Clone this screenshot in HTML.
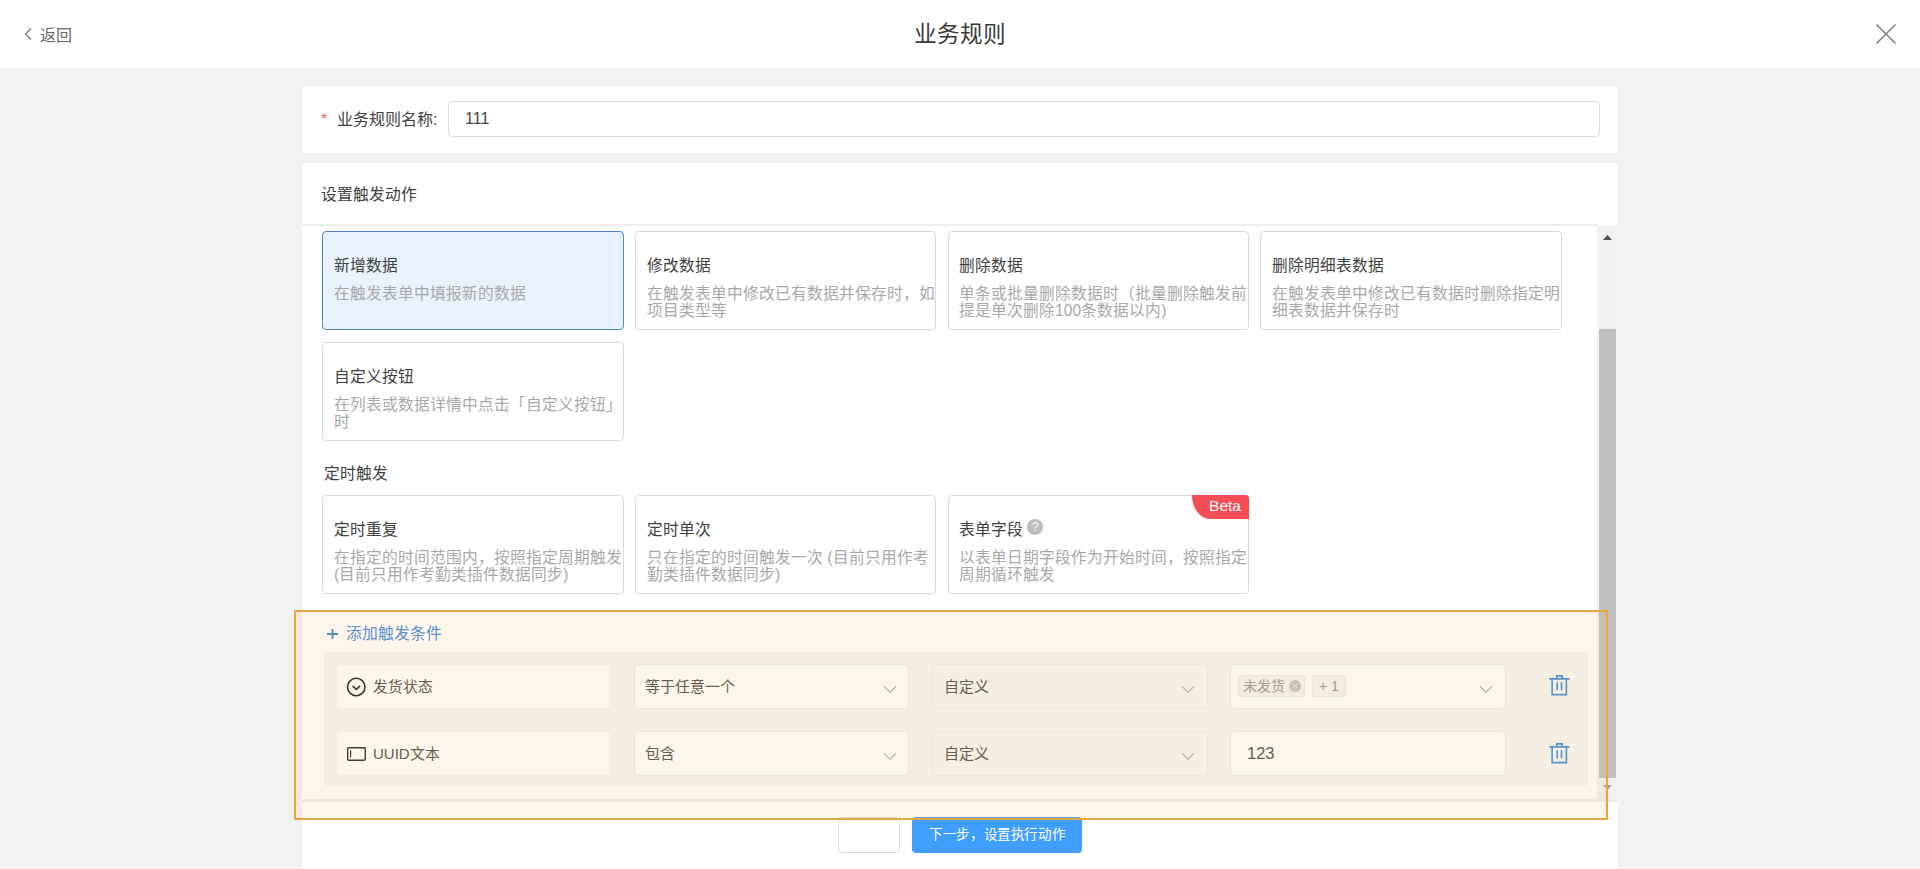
<!DOCTYPE html>
<html lang="zh-CN">
<head>
<meta charset="utf-8">
<style>
*{box-sizing:border-box;margin:0;padding:0}
html,body{width:1920px;height:869px;overflow:hidden;background:#f2f2f5;font-family:"Liberation Sans",sans-serif;color:#333}
.abs{position:absolute}
.hdr{left:0;top:0;width:1920px;height:68px;background:#fff}
.back{left:40px;top:24.5px;font-size:16px;line-height:22px;color:#666}
.title{left:0;top:20px;width:1920px;text-align:center;font-size:22.6px;line-height:30px;color:#3a3a3a}
.card1{left:302px;top:86px;width:1316px;height:67px;background:#fff;border-radius:4px}
.card2{left:302px;top:163px;width:1316px;height:62px;background:#fff;border-radius:4px 4px 0 0}
.scr{left:302px;top:225px;width:1314px;height:577px;background:#fff}
.lbl{font-size:16px;line-height:22px;color:#404040;white-space:nowrap}
.input{left:448px;top:101px;width:1152px;height:36px;border:1px solid #dcdcdc;border-radius:4px;background:#fff}
.sep{left:302px;top:224px;width:1296px;height:2px;background:#eeeeee}
.tc{width:302px;height:99px;border:1px solid #d9d9d9;border-radius:4px;background:#fff;overflow:hidden}
.tc.sel{background:#e8f2fc;border-color:#5286c8}
.tc .t{position:absolute;left:11px;top:22.6px;font-size:15.7px;line-height:22px;color:#404040;white-space:nowrap}
.tc .d{position:absolute;left:11px;top:52.7px;width:289px;font-size:15.7px;line-height:17.5px;color:#a8a8a8}
.track{left:1597px;top:226px;width:19px;height:574px;background:#f1f1f1}
.thumb{left:1599px;top:329px;width:17px;height:449px;background:#c1c1c1}
.footer{left:302px;top:799px;width:1316px;height:70px;background:#fff}
.fsh{left:302px;top:799px;width:1316px;height:3px;background:linear-gradient(#f3f3f3,#ececec)}
.btn{height:36px;border-radius:4px;font-size:14px;line-height:36px;text-align:center}
.panel{left:324px;top:652px;width:1264px;height:134px;background:#f5f6f8;border-radius:4px}
.fld{height:45px;border:1px solid #ececec;border-radius:4px;background:#fff;font-size:15px;line-height:43px;color:#555;white-space:nowrap}
.fld.dis{background:#f5f6f8}
.ovl{left:294px;top:610px;width:1314px;height:210px;border:2px solid #e7a73e;background:rgba(245,162,45,0.1)}
</style>
</head>
<body>
<div class="abs hdr"></div>
<svg class="abs" style="left:24px;top:27px" width="10" height="14" viewBox="0 0 10 14"><path d="M7 1.5 L1.5 7 L7 12.5" fill="none" stroke="#777" stroke-width="1.3"/></svg>
<div class="abs back">返回</div>
<div class="abs title">业务规则</div>
<svg class="abs" style="left:1874px;top:22px" width="24" height="24" viewBox="0 0 24 24"><path d="M2.5 2.5 L21.5 21.5 M21.5 2.5 L2.5 21.5" fill="none" stroke="#808080" stroke-width="1.6"/></svg>

<div class="abs card1"></div>
<div class="abs lbl" style="left:321px;top:109px;color:#f56c6c">*</div>
<div class="abs lbl" style="left:337px;top:108.5px">业务规则名称:</div>
<div class="abs input"></div>
<div class="abs lbl" style="left:465px;top:108px;font-size:16px;color:#444">111</div>

<div class="abs card2"></div>
<div class="abs scr"></div>
<div class="abs lbl" style="left:321px;top:183.5px;font-size:15.8px">设置触发动作</div>
<div class="abs sep"></div>

<div class="abs tc sel" style="left:322px;top:231px"><div class="t">新增数据</div><div class="d">在触发表单中填报新的数据</div></div>
<div class="abs tc" style="left:635px;top:231px;width:301px"><div class="t">修改数据</div><div class="d">在触发表单中修改已有数据并保存时，如项目类型等</div></div>
<div class="abs tc" style="left:948px;top:231px;width:301px"><div class="t" style="left:10px">删除数据</div><div class="d" style="left:10px">单条或批量删除数据时（批量删除触发前提是单次删除100条数据以内)</div></div>
<div class="abs tc" style="left:1260px;top:231px"><div class="t">删除明细表数据</div><div class="d">在触发表单中修改已有数据时删除指定明细表数据并保存时</div></div>
<div class="abs tc" style="left:322px;top:342px"><div class="t">自定义按钮</div><div class="d">在列表或数据详情中点击「自定义按钮」时</div></div>

<div class="abs lbl" style="left:324px;top:462.5px;font-size:15.7px">定时触发</div>
<div class="abs tc" style="left:322px;top:495px"><div class="t">定时重复</div><div class="d">在指定的时间范围内，按照指定周期触发(目前只用作考勤类插件数据同步)</div></div>
<div class="abs tc" style="left:635px;top:495px;width:301px"><div class="t">定时单次</div><div class="d">只在指定的时间触发一次 (目前只用作考勤类插件数据同步)</div></div>
<div class="abs tc" style="left:948px;top:495px;width:301px"><div class="t" style="left:10px">表单字段 <span style="display:inline-block;width:16px;height:16px;border-radius:8px;background:#bdbdbd;color:#fff;font-size:12px;line-height:16px;text-align:center;vertical-align:3.5px">?</span></div><div class="d" style="left:10px">以表单日期字段作为开始时间，按照指定周期循环触发</div>
</div>
<div class="abs" style="left:1192px;top:495px;width:57px;height:24px;background:#f54d55;border-top-right-radius:4px;border-bottom-left-radius:18px 24px;color:#fff;font-size:15.5px;line-height:21px;text-align:right;padding-right:8px">Beta</div>

<div class="abs track"></div>
<div class="abs thumb"></div>
<svg class="abs" style="left:1602px;top:233px" width="11" height="8"><path d="M1 7 L5.5 2 L10 7 Z" fill="#505050"/></svg>
<svg class="abs" style="left:1602px;top:784px" width="11" height="8"><path d="M1 1 L5.5 6 L10 1 Z" fill="#a0a0a0"/></svg>

<!-- conditions -->
<svg class="abs" style="left:326px;top:628px" width="13" height="12" viewBox="0 0 13 12"><path d="M1 6 H12 M6.5 1 V11" stroke="#3f88d4" stroke-width="1.9"/></svg>
<div class="abs lbl" style="left:346px;top:623px;color:#4a90e2;font-size:15.8px">添加触发条件</div>
<div class="abs panel"></div>

<div class="abs fld" style="left:337px;top:665px;width:273px;height:43px;border-color:transparent"></div>
<div class="abs fld" style="left:634px;top:664px;width:275px"></div>
<div class="abs fld dis" style="left:932px;top:664px;width:276px"></div>
<div class="abs fld" style="left:1230px;top:664px;width:276px"></div>
<div class="abs fld" style="left:337px;top:732px;width:273px;height:43px;border-color:transparent"></div>
<div class="abs fld" style="left:634px;top:731px;width:275px"></div>
<div class="abs fld dis" style="left:932px;top:731px;width:276px"></div>
<div class="abs fld" style="left:1230px;top:731px;width:276px"></div>

<svg class="abs" style="left:345px;top:676px" width="22" height="22" viewBox="0 0 22 22"><circle cx="11.25" cy="11" r="8.75" fill="none" stroke="#2a2a2a" stroke-width="1.6"/><path d="M7.6 9.9 L11.3 13.5 L15 9.9" fill="none" stroke="#2a2a2a" stroke-width="1.6"/></svg>
<div class="abs lbl" style="left:373px;top:676px;font-size:14.7px;color:#555">发货状态</div>
<div class="abs lbl" style="left:645px;top:676px;font-size:15px;color:#555">等于任意一个</div>
<div class="abs lbl" style="left:944px;top:676px;font-size:15px;color:#555">自定义</div>
<div class="abs" style="left:1238px;top:675px;width:67px;height:22px;background:#f4f4f4;border-radius:3px;border:1px solid #ebebeb"></div>
<div class="abs lbl" style="left:1243px;top:675px;font-size:14px;line-height:22px;color:#999">未发货</div>
<svg class="abs" style="left:1289px;top:680px" width="12" height="12" viewBox="0 0 12 12"><circle cx="6" cy="6" r="6" fill="#c4c4c4"/><path d="M3.8 3.8 L8.2 8.2 M8.2 3.8 L3.8 8.2" stroke="#e6e6e6" stroke-width="1"/></svg>
<div class="abs" style="left:1312px;top:675px;width:34px;height:22px;background:#f4f4f4;border-radius:3px;border:1px solid #ebebeb"></div>
<div class="abs lbl" style="left:1319px;top:675px;font-size:14px;line-height:22px;color:#999">+ 1</div>

<svg class="abs" style="left:347px;top:747px" width="20" height="15" viewBox="0 0 20 15"><rect x="0.7" y="0.7" width="17.6" height="12.6" rx="1" fill="none" stroke="#333" stroke-width="1.4"/><path d="M3.6 3.3 V10.5" stroke="#333" stroke-width="1.2"/></svg>
<div class="abs lbl" style="left:373px;top:743px;font-size:15px;color:#555">UUID文本</div>
<div class="abs lbl" style="left:645px;top:743px;font-size:15px;color:#555">包含</div>
<div class="abs lbl" style="left:944px;top:743px;font-size:15px;color:#555">自定义</div>
<div class="abs lbl" style="left:1247px;top:742px;font-size:16.5px;color:#555">123</div>

<svg class="abs" style="left:882px;top:682px" width="16" height="14"><path d="M2 4.3 L8 10.2 L14 4.3" fill="none" stroke="#bababa" stroke-width="1.4"/></svg>
<svg class="abs" style="left:1180px;top:682px" width="16" height="14"><path d="M2 4.3 L8 10.2 L14 4.3" fill="none" stroke="#bababa" stroke-width="1.4"/></svg>
<svg class="abs" style="left:1478px;top:682px" width="16" height="14"><path d="M2 4.3 L8 10.2 L14 4.3" fill="none" stroke="#bababa" stroke-width="1.4"/></svg>
<svg class="abs" style="left:882px;top:749px" width="16" height="14"><path d="M2 4.3 L8 10.2 L14 4.3" fill="none" stroke="#bababa" stroke-width="1.4"/></svg>
<svg class="abs" style="left:1180px;top:749px" width="16" height="14"><path d="M2 4.3 L8 10.2 L14 4.3" fill="none" stroke="#bababa" stroke-width="1.4"/></svg>

<svg class="abs" style="left:1548px;top:674px" width="23" height="23" viewBox="0 0 23 23"><path d="M1.2 4.9 H21.5 M8.7 4.9 V1.9 H14.2 V4.9 M4.1 4.9 V20.6 H18.4 V4.9 M9.2 8.3 V16.2 M13.5 8.3 V16.2" fill="none" stroke="#4391dc" stroke-width="1.6"/></svg>
<svg class="abs" style="left:1548px;top:742px" width="23" height="23" viewBox="0 0 23 23"><path d="M1.2 4.9 H21.5 M8.7 4.9 V1.9 H14.2 V4.9 M4.1 4.9 V20.6 H18.4 V4.9 M9.2 8.3 V16.2 M13.5 8.3 V16.2" fill="none" stroke="#4391dc" stroke-width="1.6"/></svg>

<div class="abs footer"></div>
<div class="abs fsh"></div>
<div class="abs btn" style="left:838px;top:817px;width:62px;border:1px solid #dcdcdc;background:#fff"></div>
<div class="abs btn" style="left:912px;top:817px;width:170px;background:#409eff;color:#fff;font-size:13.5px;letter-spacing:0.6px;text-indent:0.6px">下一步，设置执行动作</div>

<div class="abs ovl"></div>
</body>
</html>
